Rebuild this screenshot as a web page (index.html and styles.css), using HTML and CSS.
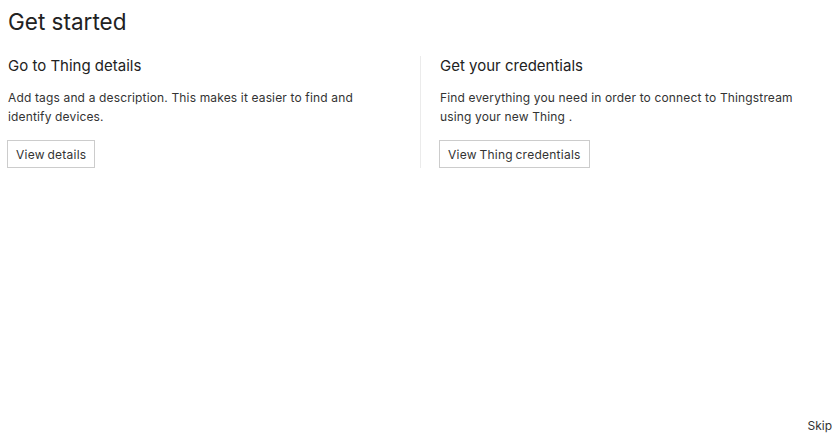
FILE: index.html
```html
<!DOCTYPE html>
<html>
<head>
<meta charset="utf-8">
<link rel="stylesheet" href="styles.css">
</head>
<body>
<div class="page">
  <h1 class="title">Get started</h1>
  <div class="columns">
    <section class="col">
      <h2 class="col-title">Go to Thing details</h2>
      <p class="col-text">Add tags and a description. This makes it easier to find and identify devices.</p>
      <button class="btn">View details</button>
    </section>
    <section class="col col-right">
      <h2 class="col-title">Get your credentials</h2>
      <p class="col-text">Find everything you need in order to connect to Thingstream using your new Thing .</p>
      <button class="btn">View Thing credentials</button>
    </section>
  </div>
  <div class="footer">
    <span class="skip">Skip</span>
  </div>
</div>
</body>
</html>
```

FILE: styles.css
```css
html, body {
  margin: 0;
  padding: 0;
  background: #fff;
}
body {
  font-family: Inter, "Noto Sans", sans-serif;
  color: #333;
}
.page {
  height: 442px;
  box-sizing: border-box;
  padding: 8px 5px 0 8px;
  display: flex;
  flex-direction: column;
}
.title {
  margin: 0;
  font-size: 22.5px;
  font-weight: 400;
  line-height: 28px;
  color: #222;
}
.columns {
  display: grid;
  grid-template-columns: 412px 1fr;
  margin-top: 20px;
}
.col {
  padding-right: 20px;
}
.col-right {
  border-left: 1px solid #ebebeb;
  padding-left: 19px;
}
.col-title {
  margin: 0;
  font-size: 15px;
  font-weight: 400;
  line-height: 20px;
  color: #222;
}
.col-text {
  margin: 12px 0 14px;
  font-size: 12px;
  letter-spacing: 0.15px;
  line-height: 19px;
  color: #333;
  max-width: 362px;
}
.btn {
  display: block;
  font-family: inherit;
  font-size: 12px;
  letter-spacing: 0.25px;
  word-spacing: -1px;
  color: #333;
  background: #fff;
  border: 1px solid #ccc;
  border-radius: 0;
  height: 28px;
  padding: 0 8px;
  margin-left: -1px;
}
.footer {
  margin-top: auto;
  display: flex;
  justify-content: flex-end;
  padding-bottom: 8px;
}
.skip {
  font-size: 12px;
  line-height: 16px;
  color: #333;
}
```
